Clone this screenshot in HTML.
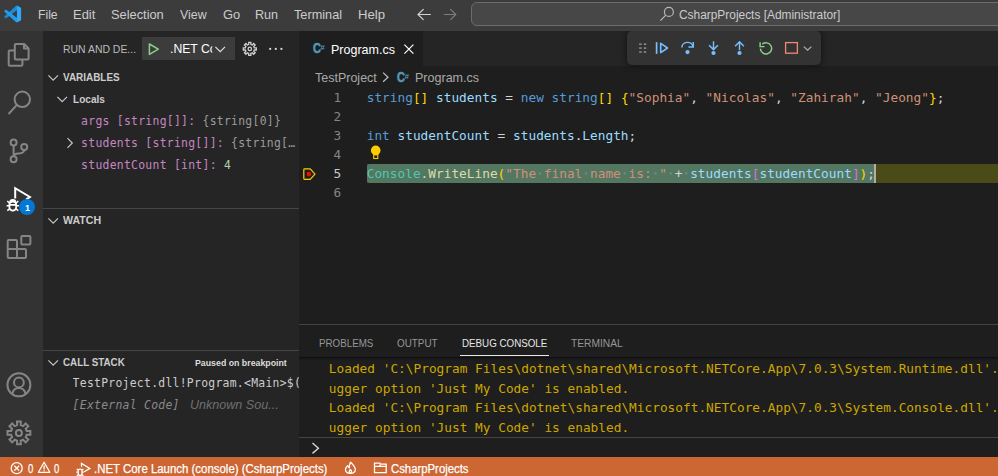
<!DOCTYPE html>
<html lang="en">
<head>
<meta charset="utf-8">
<title>Program.cs - CsharpProjects [Administrator] - Visual Studio Code</title>
<style>
html,body{margin:0;padding:0;background:#1e1e1e;}
body{width:998px;height:476px;overflow:hidden;position:relative;font-family:"Liberation Sans",sans-serif;font-size:13px;color:#cccccc;}
.a{position:absolute;}
.t{position:absolute;white-space:pre;line-height:20px;height:20px;transform-origin:0 0;}
.m{font-family:"DejaVu Sans Mono","Liberation Mono",monospace;}
svg{position:absolute;overflow:visible;}
.k{color:#569cd6}.v{color:#9cdcfe}.s{color:#ce9178}.b1{color:#ffd700}.b2{color:#da70d6}.c{color:#4ec9b0}.f{color:#dcdcaa}
.g{color:#9b9b9b}.n{color:#b5cea8}
.ms{letter-spacing:0.284px}
.me{letter-spacing:0.015px}

</style>
</head>
<body>
<!-- TITLE BAR -->
<div class="a" style="left:0;top:0;width:998px;height:31px;background:#3c3c3c;"></div>
<div class="a" style="left:471px;top:2px;width:560px;height:22px;border:1px solid #6c6c6c;border-radius:6px;background:#474747;"></div>
<!-- ACTIVITY BAR -->
<div class="a" style="left:0;top:31px;width:43px;height:426px;background:#333333;"></div>
<!-- SIDEBAR -->
<div class="a" style="left:43px;top:31px;width:256px;height:426px;background:#252526;"></div>
<div class="a" style="left:142px;top:37px;width:93px;height:23px;background:#3c3c3c;"></div>
<div class="a" style="left:43px;top:208px;width:256px;height:1px;background:#454545;"></div>
<div class="a" style="left:43px;top:350px;width:256px;height:1px;background:#454545;"></div>
<!-- EDITOR -->
<div class="a" style="left:299px;top:31px;width:699px;height:35px;background:#252526;"></div>
<div class="a" style="left:299px;top:31px;width:124px;height:35px;background:#1e1e1e;"></div>
<div class="a" style="left:607px;top:31px;width:234px;height:50px;overflow:hidden;"><div class="a" style="left:20px;top:0;width:194px;height:34px;background:#333333;border-radius:5px;box-shadow:0 0 6px 1px rgba(0,0,0,0.45);"></div></div>
<div class="a" style="left:367px;top:164px;width:631px;height:19px;background:#4b4b18;"></div>
<div class="a" style="left:367px;top:164px;width:507px;height:19px;background:#547762;border-radius:3px 0 0 3px;"></div>
<div class="a" style="left:874px;top:164px;width:2px;height:19px;background:#aeafad;"></div>
<!-- PANEL -->
<div class="a" style="left:299px;top:324px;width:699px;height:1px;background:#444444;"></div>
<div class="a" style="left:299px;top:357px;width:699px;height:4px;background:linear-gradient(#0c0c0c,rgba(20,20,20,0.6) 40%,rgba(30,30,30,0));"></div>
<div class="a" style="left:460px;top:355px;width:89px;height:1px;background:#e7e7e7;"></div>
<div class="a" style="left:299px;top:437px;width:699px;height:1px;background:#444444;"></div>
<!-- STATUS BAR -->
<div class="a" style="left:0;top:457px;width:998px;height:19px;background:#cc6633;"></div>
<svg width="998" height="476" viewBox="0 0 998 476" style="left:0;top:0">
<g transform="translate(4.3,5.6) scale(0.168)">
<path d="M96.4614 10.7962L75.8569 0.875542C73.4719 -0.272773 70.6217 0.211611 68.75 2.08333L1.29858 63.5832C-0.515693 65.2373 -0.513607 68.0937 1.30308 69.7452L6.81272 74.7538C8.29793 76.1039 10.5347 76.2033 12.1338 74.9905L93.3609 13.3699C96.086 11.3026 100 13.2462 100 16.6667V16.4275C100 14.0265 98.6246 11.8378 96.4614 10.7962Z" fill="#1a8ad6"/>
<path d="M96.4614 89.2038L75.8569 99.1245C73.4719 100.273 70.6217 99.7884 68.75 97.9167L1.29858 36.4169C-0.515693 34.7627 -0.513607 31.9063 1.30308 30.2548L6.81272 25.2462C8.29793 23.8961 10.5347 23.7967 12.1338 25.0095L93.3609 86.6301C96.086 88.6974 100 86.7538 100 83.3334V83.5726C100 85.9735 98.6246 88.1622 96.4614 89.2038Z" fill="#1f9cf0"/>
<path d="M75.8578 99.1263C73.4721 100.274 70.6219 99.7885 68.75 97.9166C71.0564 100.223 75 98.5895 75 95.3278V4.67213C75 1.41039 71.0564 -0.223106 68.75 2.08329C70.6219 0.211402 73.4721 -0.273666 75.8578 0.873633L96.4587 10.7807C98.6234 11.8217 100 14.0112 100 16.4132V83.5871C100 85.9891 98.6234 88.1786 96.4586 89.2196L75.8578 99.1263Z" fill="#32a9f8"/>
</g>
<path d="M430.8 14.5H418 M423.6 9.1L418 14.5L423.6 19.9" fill="none" stroke="#d2d2d2" stroke-width="1.2"/>
<path d="M443.9 14.5H455.8 M450.3 9.1L455.8 14.5L450.3 19.9" fill="none" stroke="#7c7c7c" stroke-width="1.2"/>
<g fill="none" stroke="#b8b8b8" stroke-width="1.2"><circle cx="668.9" cy="11.9" r="4.5"/><path d="M665.8 15.2L660.4 20.6"/></g>
<g fill="none" stroke="#858585" stroke-width="2" stroke-linejoin="round"><path d="M14.8 58.6V45a1 1 0 0 1 1-1h8.4l4.4 4.4v10.2a1 1 0 0 1-1 1H15.8a1 1 0 0 1-1-1Z"/><path d="M24.0 44.2V48.6H28.4"/><path d="M14.6 50.4H9.7a1 1 0 0 0-1 1V64.8a1 1 0 0 0 1 1H21.4a1 1 0 0 0 1-1V60"/></g>
<g fill="none" stroke="#858585" stroke-width="2"><circle cx="22.3" cy="99.3" r="7.7"/><path d="M16.9 104.9L8.6 114.0"/></g>
<g fill="none" stroke="#858585" stroke-width="2"><circle cx="13.6" cy="142.6" r="3"/><circle cx="24.2" cy="146.9" r="3"/><circle cx="13.6" cy="159.3" r="3"/><path d="M13.6 145.6V156.3 M24.2 149.9C24.2 153.6 20 153.2 17.5 153.6C15.2 154 13.6 154.8 13.6 156.3"/></g>
<g fill="none" stroke="#ffffff" stroke-width="2" stroke-linejoin="miter"><path d="M15.2 198.4V188.2L29.9 197L26.2 199.4"/></g>
<g fill="none" stroke="#ffffff" stroke-width="1.8"><path d="M9.4 204.6a3.4 3 0 0 1 6.8 0V207.2a3.4 3.4 0 0 1-6.8 0Z"/><path d="M9.4 204.9H16.2"/><path d="M10.2 202.3a2.6 2.3 0 0 1 5.2 0"/><path d="M9.4 205.8H6.6 M16.2 205.8H19 M9.7 203.2L7.3 201 M15.9 203.2L18.3 201 M9.9 208.6L7.3 210.6 M15.7 208.6L18.3 210.6" stroke-width="1.5"/></g>
<circle cx="27" cy="207" r="8" fill="#0078d4"/>
<g fill="none" stroke="#858585" stroke-width="2" stroke-linejoin="round"><rect x="21.3" y="235.9" width="9.1" height="8.7" rx="1"/><path d="M8.7 240H16a1 1 0 0 1 1 1V249H25a1 1 0 0 1 1 1V257a1 1 0 0 1-1 1H8.7a1 1 0 0 1-1-1V241a1 1 0 0 1 1-1Z"/><path d="M7.7 249H17V258"/></g>
<g fill="none" stroke="#858585" stroke-width="2"><circle cx="18.9" cy="384.8" r="11.5"/><circle cx="18.9" cy="382.4" r="4.9"/><path d="M12.2 394C13 390 15.8 387.9 18.9 387.9C22 387.9 24.8 390 25.6 394"/></g>
<g fill="none" stroke="#858585" stroke-width="2" stroke-linejoin="miter"><path d="M17.09 425.11 L17.00 421.46 L20.80 421.46 L20.71 425.11 L23.13 426.11 L25.64 423.46 L28.34 426.16 L25.69 428.67 L26.69 431.09 L30.34 431.00 L30.34 434.80 L26.69 434.71 L25.69 437.13 L28.34 439.64 L25.64 442.34 L23.13 439.69 L20.71 440.69 L20.80 444.34 L17.00 444.34 L17.09 440.69 L14.67 439.69 L12.16 442.34 L9.46 439.64 L12.11 437.13 L11.11 434.71 L7.46 434.80 L7.46 431.00 L11.11 431.09 L12.11 428.67 L9.46 426.16 L12.16 423.46 L14.67 426.11 Z"/><circle cx="18.9" cy="432.9" r="3"/></g>
<path d="M48.4 75.3L53.2 80.1L58 75.3" fill="none" stroke="#c5c5c5" stroke-width="1.2"/>
<path d="M57.4 96.8L62.2 101.6L67 96.8" fill="none" stroke="#c5c5c5" stroke-width="1.2"/>
<path d="M67.5 138.2L72.3 143.0L67.5 147.8" fill="none" stroke="#c5c5c5" stroke-width="1.2"/>
<path d="M48.4 218.3L53.2 223.1L58 218.3" fill="none" stroke="#c5c5c5" stroke-width="1.2"/>
<path d="M48.4 360.3L53.2 365.1L58 360.3" fill="none" stroke="#c5c5c5" stroke-width="1.2"/>
<path d="M149.4 44V54.4L158.3 49.2Z" fill="none" stroke="#89d185" stroke-width="1.5" stroke-linejoin="round"/>
<path d="M215.4 46.9L220.2 51.7L225 46.9" fill="none" stroke="#e0e0e0" stroke-width="1.2"/>
<g fill="none" stroke="#d0d0d0" stroke-width="1.3"><path d="M248.76 44.42 L248.72 42.39 L250.88 42.39 L250.84 44.42 L252.23 45.00 L253.64 43.53 L255.17 45.06 L253.70 46.47 L254.28 47.86 L256.31 47.82 L256.31 49.98 L254.28 49.94 L253.70 51.33 L255.17 52.74 L253.64 54.27 L252.23 52.80 L250.84 53.38 L250.88 55.41 L248.72 55.41 L248.76 53.38 L247.37 52.80 L245.96 54.27 L244.43 52.74 L245.90 51.33 L245.32 49.94 L243.29 49.98 L243.29 47.82 L245.32 47.86 L245.90 46.47 L244.43 45.06 L245.96 43.53 L247.37 45.00 Z"/><circle cx="249.8" cy="48.9" r="1.7"/></g>
<g fill="#d8d8d8"><circle cx="270.2" cy="48.9" r="1.1"/><circle cx="275.8" cy="48.9" r="1.1"/><circle cx="281.4" cy="48.9" r="1.1"/></g>
<path d="M404.4 44.6L413.4 53.6M413.4 44.6L404.4 53.6" fill="none" stroke="#ffffff" stroke-width="1.2"/>
<path d="M383.1 72.6L388 77.2L383.1 81.8" fill="none" stroke="#c0c0c0" stroke-width="1.2"/>
<g fill="#8c8c8c"><rect x="639.2" y="43.4" width="2.4" height="1.6"/><rect x="639.2" y="47.3" width="2.4" height="1.6"/><rect x="639.2" y="51.2" width="2.4" height="1.6"/><rect x="643.8" y="43.4" width="2.4" height="1.6"/><rect x="643.8" y="47.3" width="2.4" height="1.6"/><rect x="643.8" y="51.2" width="2.4" height="1.6"/></g>
<g fill="none" stroke="#75beff" stroke-width="1.6" stroke-linejoin="round"><path d="M656.6 42.1V53.9" stroke-width="1.7"/><path d="M660.7 43.3V52.7L667.5 48Z"/></g>
<g fill="none" stroke="#75beff" stroke-width="1.45"><path d="M681.9 47.6A5.6 5.2 0 0 1 693 46.6"/><path d="M693.3 41.9V46.9H688.4"/></g><circle cx="687.5" cy="52.1" r="2.1" fill="#75beff"/>
<g fill="none" stroke="#75beff" stroke-width="1.45"><path d="M713.5 41.2V49.6 M709.1 45.2L713.5 49.6L717.9 45.2"/></g><circle cx="713.5" cy="53" r="2.1" fill="#75beff"/>
<g fill="none" stroke="#75beff" stroke-width="1.45"><path d="M739.5 50.2V41.8 M735.1 46.2L739.5 41.8L743.9 46.2"/></g><circle cx="739.5" cy="53" r="2.1" fill="#75beff"/>
<g fill="none" stroke="#89d185" stroke-width="1.45"><path d="M762.3 44.2A5.6 5.6 0 1 1 760.4 48.6"/><path d="M760.1 42.2V46.6H764.5"/></g>
<rect x="785.6" y="42.6" width="11.8" height="10.6" fill="none" stroke="#f48771" stroke-width="1.3"/>
<path d="M803.8 46.6L807.5999999999999 50.2L811.4 46.6" fill="none" stroke="#b0b0b0" stroke-width="1.2"/>
<path d="M304.6 168.9H310.2L315 174.1L310.2 179.4H304.6a0.8 0.8 0 0 1-0.8-0.8V169.7a0.8 0.8 0 0 1 0.8-0.8Z" fill="none" stroke="#ffcc00" stroke-width="1.2" stroke-linejoin="round"/><circle cx="308.9" cy="174.1" r="2.3" fill="#e51400"/>
<g><circle cx="375.7" cy="150.4" r="4.8" fill="#ffcc00"/><rect x="373.7" y="154.8" width="4.1" height="3.7" fill="#1e1e1e" stroke="#ffcc00" stroke-width="1.1"/><rect x="373.2" y="152.5" width="5.1" height="2.6" fill="#ffcc00"/></g>
<path d="M312.5 443L318.4 448.2L312.5 453.4" fill="none" stroke="#d4d4d4" stroke-width="1.4"/>
<g fill="none" stroke="#ffffff" stroke-width="1.3"><circle cx="16.7" cy="468.2" r="5.5"/><path d="M14.3 465.8L19.1 470.6M19.1 465.8L14.3 470.6"/></g>
<g fill="none" stroke="#ffffff" stroke-width="1.3" stroke-linejoin="round"><path d="M44.1 462.3L49.8 472.3H38.4Z"/><path d="M44.1 465.6V469.4M44.1 470.3V471.3"/></g>
<g fill="none" stroke="#ffffff" stroke-width="1.3"><path d="M81.5 466.8V463.4L89.8 468.4L84.2 471.7"/><path d="M78.2 471a1.9 1.8 0 0 1 3.8 0V473.2a1.9 2.2 0 0 1-3.8 0Z M78.2 472.1H76.3 M82 472.1H83.9 M78.3 470.2L76.8 469 M81.9 470.2L83.4 469 M78.4 474.4L76.8 475.8 M81.8 474.4L83.4 475.8"/></g>
<g fill="none" stroke="#ffffff" stroke-width="1.3" stroke-linejoin="round"><path d="M350.6 462.2C352.6 464.4 355.3 466.6 355.3 469.6C355.3 472.2 353.2 473.4 350.4 473.4C347.6 473.4 345.5 472.2 345.5 469.6C345.5 467.8 346.6 466.6 347.6 465.6C348 467 348.8 467.6 349.4 467.8C349.2 465.8 349.6 463.8 350.6 462.2Z"/><path d="M350.4 473.2C349 472.6 348.8 471 350.4 469.6C352 471 351.8 472.6 350.4 473.2Z"/></g>
<g fill="none" stroke="#ffffff" stroke-width="1.3"><path d="M374.5 463.1H379.8L380.9 464.2H386.2V472.7H374.5Z"/><path d="M374.5 466.3H386.2 M380.6 464.4L379.4 466.3"/></g>
<rect x="538.98" y="172.4" width="2" height="2" fill="#ffffff" fill-opacity="0.17"/><rect x="585.16" y="172.4" width="2" height="2" fill="#ffffff" fill-opacity="0.17"/><rect x="623.65" y="172.4" width="2" height="2" fill="#ffffff" fill-opacity="0.17"/><rect x="654.44" y="172.4" width="2" height="2" fill="#ffffff" fill-opacity="0.17"/><rect x="669.83" y="172.4" width="2" height="2" fill="#ffffff" fill-opacity="0.17"/><rect x="685.23" y="172.4" width="2" height="2" fill="#ffffff" fill-opacity="0.17"/>
</svg>
<div class="t" id="m1" style="left:37.59px;top:5px;font-size:13px;color:#cccccc;transform:scaleX(0.9358);">File</div>
<div class="t" id="m2" style="left:73.00px;top:5px;font-size:13px;color:#cccccc;transform:scaleX(0.9951);">Edit</div>
<div class="t" id="m3" style="left:111.46px;top:5px;font-size:13px;color:#cccccc;transform:scaleX(0.9863);">Selection</div>
<div class="t" id="m4" style="left:179.79px;top:5px;font-size:13px;color:#cccccc;transform:scaleX(0.9536);">View</div>
<div class="t" id="m5" style="left:222.82px;top:5px;font-size:13px;color:#cccccc;transform:scaleX(0.9911);">Go</div>
<div class="t" id="m6" style="left:255.33px;top:5px;font-size:13px;color:#cccccc;transform:scaleX(0.9667);">Run</div>
<div class="t" id="m7" style="left:294.42px;top:5px;font-size:13px;color:#cccccc;transform:scaleX(0.9777);">Terminal</div>
<div class="t" id="m8" style="left:358.21px;top:5px;font-size:13px;color:#cccccc;transform:scaleX(1.0097);">Help</div>
<div class="t" id="cct" style="left:678.88px;top:5px;font-size:12.5px;color:#cccccc;transform:scaleX(0.9521);">CsharpProjects [Administrator]</div>
<div class="t" id="sh" style="left:63.27px;top:39px;font-size:11px;color:#bbbbbb;transform:scaleX(0.9483);">RUN AND DE...</div>
<div class="t" id="dd" style="left:169.74px;top:39px;font-size:13px;color:#ffffff;transform:scaleX(0.9400);width:45px;overflow:hidden;">.NET Core Launch</div>
<div class="t" id="s1" style="left:63.23px;top:67px;font-size:11px;color:#cccccc;transform:scaleX(0.9036);font-weight:bold;">VARIABLES</div>
<div class="t" id="s2" style="left:72.91px;top:89px;font-size:11px;color:#cccccc;transform:scaleX(0.9179);font-weight:bold;">Locals</div>
<div class="t m ms" id="v1" style="left:81.10px;top:111px;font-size:11.4px;color:#c586c0;">args [string[]]: <span class="g">{string[0]}</span></div>
<div class="t m ms" id="v2" style="left:81.10px;top:133px;font-size:11.4px;color:#c586c0;">students [string[]]: <span class="g">{string[…</span></div>
<div class="t m ms" id="v3" style="left:81.10px;top:155px;font-size:11.4px;color:#c586c0;">studentCount [int]: <span class="n">4</span></div>
<div class="t" id="s3" style="left:63.20px;top:210px;font-size:11px;color:#cccccc;transform:scaleX(0.9632);font-weight:bold;">WATCH</div>
<div class="t" id="s4" style="left:63.16px;top:352px;font-size:11px;color:#cccccc;transform:scaleX(0.8913);font-weight:bold;">CALL STACK</div>
<div class="t" id="pb" style="left:194.87px;top:352.6px;font-size:9.4px;color:#dcdcdc;transform:scaleX(0.9368);font-weight:bold;">Paused on breakpoint</div>
<div class="t m ms" id="cs1" style="left:72.60px;top:373px;font-size:11.4px;color:#cccccc;width:226.4px;overflow:hidden;">TestProject.dll!Program.&lt;Main&gt;$(string[] args)</div>
<div class="t m ms" id="cs2" style="left:72.60px;top:395px;font-size:11.4px;color:#8a8a8a;font-style:italic;">[External Code]</div>
<div class="t" id="cs3" style="left:190.21px;top:395px;font-size:12px;color:#6f6f6f;transform:scaleX(1.0462);font-style:italic;">Unknown Sou...</div>
<div class="t" id="tab" style="left:330.77px;top:40px;font-size:13px;color:#ffffff;transform:scaleX(0.9611);">Program.cs</div>
<div class="t" id="bc1" style="left:315.00px;top:68px;font-size:13px;color:#a9a9a9;transform:scaleX(0.9614);">TestProject</div>
<div class="t" id="bc2" style="left:415.00px;top:68px;font-size:13px;color:#a9a9a9;transform:scaleX(0.9640);">Program.cs</div>
<div class="t m me" id="ln1" style="left:333.60px;top:88px;font-size:12.785px;color:#858585;line-height:19px;height:19px;">1</div>
<div class="t m me" id="ln2" style="left:333.60px;top:107px;font-size:12.785px;color:#858585;line-height:19px;height:19px;">2</div>
<div class="t m me" id="ln3" style="left:333.60px;top:126px;font-size:12.785px;color:#858585;line-height:19px;height:19px;">3</div>
<div class="t m me" id="ln4" style="left:333.60px;top:145px;font-size:12.785px;color:#858585;line-height:19px;height:19px;">4</div>
<div class="t m me" id="ln5" style="left:333.60px;top:164px;font-size:12.785px;color:#c6c6c6;line-height:19px;height:19px;">5</div>
<div class="t m me" id="ln6" style="left:333.60px;top:183px;font-size:12.785px;color:#858585;line-height:19px;height:19px;">6</div>
<div class="t m me" id="c1" style="left:366.70px;top:88px;font-size:12.785px;color:#d4d4d4;line-height:19px;height:19px;"><span class="k">string</span><span class="b1">[]</span> <span class="v">students</span> = <span class="k">new</span> <span class="k">string</span><span class="b1">[]</span> <span class="b1">{</span><span class="s">"Sophia"</span>, <span class="s">"Nicolas"</span>, <span class="s">"Zahirah"</span>, <span class="s">"Jeong"</span><span class="b1">}</span>;</div>
<div class="t m me" id="c3" style="left:366.70px;top:126px;font-size:12.785px;color:#d4d4d4;line-height:19px;height:19px;"><span class="k">int</span> <span class="v">studentCount</span> = <span class="v">students</span>.<span class="v">Length</span>;</div>
<div class="t m me" id="c5" style="left:366.70px;top:164px;font-size:12.785px;color:#d4d4d4;line-height:19px;height:19px;"><span class="c">Console</span>.<span class="f">WriteLine</span><span class="b1">(</span><span class="s">"The final name is: "</span> + <span class="v">students</span><span class="b2">[</span><span class="v">studentCount</span><span class="b2">]</span><span class="b1">)</span>;</div>
<div class="t" id="p1" style="left:319.04px;top:333px;font-size:11px;color:#969696;transform:scaleX(0.8890);">PROBLEMS</div>
<div class="t" id="p2" style="left:397.19px;top:333px;font-size:11px;color:#969696;transform:scaleX(0.8966);">OUTPUT</div>
<div class="t" id="p3" style="left:461.96px;top:333px;font-size:11px;color:#e7e7e7;transform:scaleX(0.8892);">DEBUG CONSOLE</div>
<div class="t" id="p4" style="left:571.17px;top:333px;font-size:11px;color:#969696;transform:scaleX(0.9286);">TERMINAL</div>
<div class="t m me" id="o1" style="left:328.80px;top:358.6px;font-size:12.785px;color:#cca700;">Loaded 'C:\Program Files\dotnet\shared\Microsoft.NETCore.App\7.0.3\System.Runtime.dll'.</div>
<div class="t m me" id="o2" style="left:328.80px;top:379.1px;font-size:12.785px;color:#cca700;">ugger option 'Just My Code' is enabled.</div>
<div class="t m me" id="o3" style="left:328.80px;top:397.6px;font-size:12.785px;color:#cca700;">Loaded 'C:\Program Files\dotnet\shared\Microsoft.NETCore.App\7.0.3\System.Console.dll'.</div>
<div class="t m me" id="o4" style="left:328.80px;top:418.1px;font-size:12.785px;color:#cca700;">ugger option 'Just My Code' is enabled.</div>
<div class="t" id="st1" style="left:28.18px;top:459px;font-size:12px;color:#ffffff;transform:scaleX(0.8009);-webkit-text-stroke:0.25px #ffffff;">0</div>
<div class="t" id="st2" style="left:54.42px;top:459px;font-size:12px;color:#ffffff;transform:scaleX(0.7921);-webkit-text-stroke:0.25px #ffffff;">0</div>
<div class="t" id="st3" style="left:94.04px;top:459px;font-size:12px;color:#ffffff;transform:scaleX(0.9518);-webkit-text-stroke:0.25px #ffffff;">.NET Core Launch (console) (CsharpProjects)</div>
<div class="t" id="st4" style="left:391.08px;top:459px;font-size:12px;color:#ffffff;transform:scaleX(0.9450);-webkit-text-stroke:0.25px #ffffff;">CsharpProjects</div>
<div class="t" id="bdg" style="left:24.90px;top:198.4px;font-size:9px;color:#ffffff;font-weight:bold;">1</div>
<div class="t" id="ic1" style="left:312.79px;top:38.1px;font-size:14.2px;color:#519aba;transform:scaleX(0.7737);font-weight:bold;-webkit-text-stroke:0.55px #519aba;">C</div>
<div class="t" id="ic1h" style="left:320.30px;top:38.3px;font-size:8px;color:#519aba;font-weight:bold;">#</div>
<div class="t" id="ic2" style="left:396.79px;top:67px;font-size:14.2px;color:#519aba;transform:scaleX(0.7737);font-weight:bold;-webkit-text-stroke:0.55px #519aba;">C</div>
<div class="t" id="ic2h" style="left:404.50px;top:67.2px;font-size:8px;color:#519aba;font-weight:bold;">#</div>

</body>
</html>
